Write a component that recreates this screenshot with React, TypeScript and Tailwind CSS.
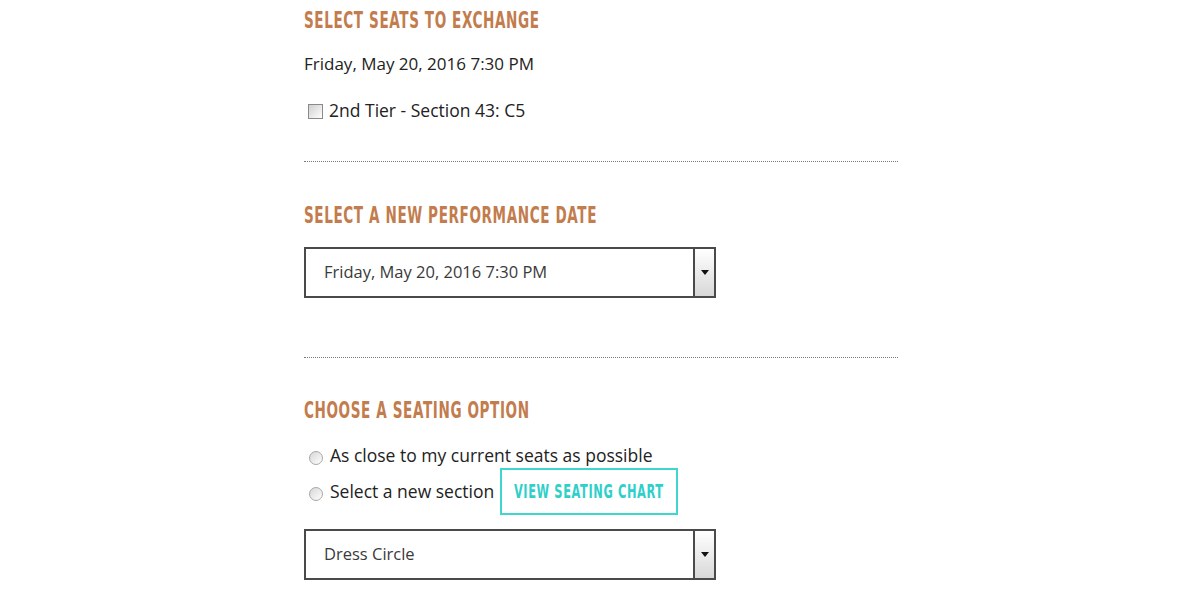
import React from 'react';

const headFont = { fontFamily: '"DejaVu Sans", "Liberation Sans", sans-serif' };
const bodyFont = { fontFamily: '"Open Sans", "Noto Sans", sans-serif' };

function Heading({ children }: { children: React.ReactNode }) {
  return (
    <div className="h-[40px] flex items-center">
      <h2 className="inline-block origin-left scale-x-[0.59] text-[23px] font-bold uppercase tracking-[1px] text-[#c27c4d] leading-none whitespace-nowrap" style={headFont}>
        {children}
      </h2>
    </div>
  );
}

function Select({ value }: { value: string }) {
  return (
    <div className="w-[412px] h-[51px] flex border-2 border-[#4a4a4a] bg-white">
      <div className="flex-1 flex items-center pl-[18px] text-[16.5px] text-[#3a3a3a]" style={bodyFont}>
        {value}
      </div>
      <div className="w-[21px] border-l-2 border-[#4a4a4a] bg-gradient-to-b from-white to-[#d8d8d8] flex items-center justify-center">
        <svg width="8" height="5" viewBox="0 0 8 5">
          <path d="M0 0h8L4 5z" fill="#111" />
        </svg>
      </div>
    </div>
  );
}

function Radio() {
  return (
    <span className="inline-block w-[14px] h-[14px] rounded-full border border-[#a8a8a8] bg-gradient-to-br from-[#d6d6d6] to-white shrink-0" />
  );
}

export default function App() {
  return (
    <div className="min-h-screen bg-white">
      <div className="ml-[304px] w-[594px]">
        <Heading>Select Seats to Exchange</Heading>

        <div className="mt-[12px] h-[24px] flex items-center text-[17px] text-[#222]" style={bodyFont}>
          Friday, May 20, 2016 7:30 PM
        </div>

        <label className="mt-[22px] h-[24px] flex items-center text-[17.5px] text-[#222]" style={bodyFont}>
          <span className="ml-[4px] mr-[6px] mt-[3px] inline-block w-[15px] h-[15px] border border-[#8a8a8a] bg-gradient-to-br from-[#d0d0d0] to-white" />
          2nd Tier - Section 43: C5
        </label>

        <div className="mt-[39px] border-t border-dotted border-[#777]" />

        <div className="mt-[33px]">
          <Heading>Select a New Performance Date</Heading>
        </div>
        <div className="mt-[12px]">
          <Select value="Friday, May 20, 2016 7:30 PM" />
        </div>

        <div className="mt-[59px] border-t border-dotted border-[#777]" />

        <div className="mt-[32px]">
          <Heading>Choose a Seating Option</Heading>
        </div>

        <label className="mt-[13px] h-[24px] flex items-center gap-[7px] pl-[5px] text-[17.5px] text-[#222]" style={bodyFont}>
          <span className="mt-[5px] flex"><Radio /></span>
          As close to my current seats as possible
        </label>

        <div className="mt-[1px] h-[47px] flex items-center text-[17.5px] text-[#222]" style={bodyFont}>
          <label className="flex items-center gap-[7px] pl-[5px]">
            <span className="mt-[5px] flex"><Radio /></span>
            Select a new section
          </label>
          <button className="ml-[6px] h-[47px] w-[178px] border-2 border-[#3fd6d0] flex items-center justify-center overflow-hidden">
            <span className="inline-block scale-x-[0.6] text-[19px] font-bold uppercase tracking-[1px] text-[#2fcfca] leading-none whitespace-nowrap" style={headFont}>
              View Seating Chart
            </span>
          </button>
        </div>

        <div className="mt-[14px]">
          <Select value="Dress Circle" />
        </div>
      </div>
    </div>
  );
}
